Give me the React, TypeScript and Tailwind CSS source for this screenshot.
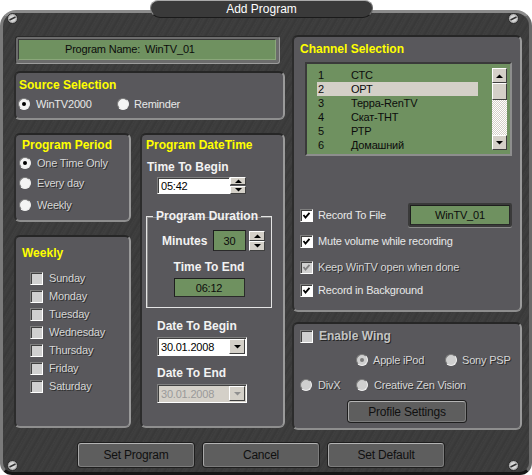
import React from "react";

const body = "text-[11px] tracking-[-0.2px] leading-[14px]";
const etched = "text-[#d6d6d6] [text-shadow:1px_1px_0_#2e2e2e]";
const bevel =
  "bg-[#d4d0c8] border border-t-white border-l-white border-r-[#404040] border-b-[#404040]";
const sunken =
  "border border-t-[#808080] border-l-[#808080] border-r-white border-b-white shadow-[inset_1px_1px_0_#404040]";

function Title({ children }: { children: React.ReactNode }) {
  return <div className="text-[12px] font-bold leading-[14px] text-[#ffff00] whitespace-nowrap">{children}</div>;
}

function Heading({ children, className = "" }: { children: React.ReactNode; className?: string }) {
  return (
    <div className={"text-[12px] font-bold leading-[14px] text-[#f2f2f2] whitespace-nowrap " + className}>{children}</div>
  );
}

function Tri({ up, color = "#000" }: { up?: boolean; color?: string }) {
  return (
    <svg width="7" height="4" viewBox="0 0 7 4">
      <polygon points={up ? "0,4 7,4 3.5,0.5" : "0,0 7,0 3.5,3.5"} fill={color} />
    </svg>
  );
}

function Radio({ checked, disabled }: { checked?: boolean; disabled?: boolean }) {
  return (
    <div
      className={
        "w-[12px] h-[12px] shrink-0 rounded-full flex items-center justify-center border border-t-[#7a7a7a] border-l-[#7a7a7a] border-r-[#f0f0f0] border-b-[#f0f0f0] " +
        (disabled ? "bg-[#cfcfcf]" : "bg-[#f4f4f4]")
      }
    >
      {checked && <div className={"w-[4px] h-[4px] rounded-full " + (disabled ? "bg-[#7a7a7a]" : "bg-black")} />}
    </div>
  );
}

function Check({ checked, disabled, gray }: { checked?: boolean; disabled?: boolean; gray?: boolean }) {
  return (
    <div
      className={
        "w-[13px] h-[13px] shrink-0 flex items-center justify-center " +
        sunken +
        " " +
        (disabled || gray ? "bg-[#d0d0d0]" : "bg-white")
      }
    >
      {checked && (
        <svg width="9" height="9" viewBox="0 0 9 9">
          <polyline
            points="1.5,4 3.5,6.5 7.5,1.8"
            fill="none"
            stroke={disabled ? "#808080" : "#000"}
            strokeWidth="1.8"
          />
        </svg>
      )}
    </div>
  );
}

function Panel({ className = "", children }: { className?: string; children?: React.ReactNode }) {
  return (
    <div
      className={
        "rounded-[6px] bg-[#59585c] border-2 border-t-[#262626] border-l-[#2c2c2c] border-r-[#9a9a9a] border-b-[#8e8e8e] flex flex-col " +
        className
      }
    >
      {children}
    </div>
  );
}

function GreenBox({ className = "", children }: { className?: string; children?: React.ReactNode }) {
  return (
    <div
      className={
        "bg-[#6f9160] border border-t-[#1e1e1e] border-l-[#1e1e1e] border-r-[#2a2a2a] border-b-[#2a2a2a] flex items-center justify-center text-[#0c0c0c] " +
        body +
        " " +
        className
      }
    >
      {children}
    </div>
  );
}

function SpinButtons({ h }: { h: number }) {
  const half = h === 20 ? "h-[10px]" : "h-[8px]";
  return (
    <div className="flex flex-col justify-between w-[16px] shrink-0" style={{ height: h }}>
      <div className={bevel + " " + half + " flex items-center justify-center"}>
        <Tri up />
      </div>
      <div className={bevel + " " + half + " flex items-center justify-center"}>
        <Tri />
      </div>
    </div>
  );
}

function Combo({ value, disabled }: { value: string; disabled?: boolean }) {
  return (
    <div
      className={
        "w-[90px] h-[19px] flex items-center " +
        sunken +
        " " +
        (disabled ? "bg-[#d4d0c8]" : "bg-white")
      }
    >
      <span className={"flex-1 pl-[3px] " + body + " " + (disabled ? "text-[#9a9a9a]" : "text-black")}>{value}</span>
      <div className={bevel + " w-[16px] h-[15px] mr-[1px] flex items-center justify-center"}>
        <Tri color={disabled ? "#909090" : "#000"} />
      </div>
    </div>
  );
}

function Screw() {
  return (
    <svg width="11" height="11" viewBox="0 0 11 11">
      <circle cx="5.5" cy="5.5" r="5" fill="#b4b4b4" stroke="#2a2a2a" strokeWidth="1" />
      <circle cx="5.5" cy="5.5" r="3.2" fill="#d8d8d8" />
      <line x1="2.5" y1="7" x2="8.5" y2="4" stroke="#303030" strokeWidth="1.4" />
    </svg>
  );
}

function BigButton({ children, className = "" }: { children: React.ReactNode; className?: string }) {
  return (
    <div
      className={
        "rounded-[3px] bg-[#5e5e5e] border border-t-[#b4b4b4] border-l-[#a8a8a8] border-r-[#7c7c7c] border-b-[#7c7c7c] shadow-[0_0_0_1px_#1e1e1e] flex items-center justify-center text-[#101010] text-[12px] tracking-[-0.2px] " +
        className
      }
    >
      {children}
    </div>
  );
}

const channels = [
  ["1", "СТС"],
  ["2", "ОРТ"],
  ["3", "Терра-RenTV"],
  ["4", "Скат-ТНТ"],
  ["5", "РТР"],
  ["6", "Домашний"],
];

const days = ["Sunday", "Monday", "Tuesday", "Wednesday", "Thursday", "Friday", "Saturday"];

export default function App() {
  return (
    <div className="relative w-[532px] h-[475px] bg-white overflow-hidden font-['Liberation_Sans',Arial,sans-serif] text-[#e8e8e8]">
      <div className="mt-[10px] h-[465px] rounded-t-[16px] rounded-b-[12px] border-[3px] border-t-[#8c8c8c] border-l-[#7a7a7a] border-r-[#6a6a6a] border-b-[#161616] bg-[#3d3d3d] bg-[repeating-linear-gradient(120deg,#3b3b3b_0px,#3f3f3f_2px,#383838_5px,#404040_7px)] pt-[22px] pl-[11px] flex flex-col">
        <div className="flex items-start">
          {/* LEFT COLUMN */}
          <div className="w-[271px] flex flex-col">
            <div className="mt-[1px] ml-[1px] w-[265px] h-[28px] rounded-[3px] bg-[#6c6c6c] border border-t-[#2a2a2a] border-l-[#2a2a2a] border-r-[#9c9c9c] border-b-[#9c9c9c] p-[2px] pr-[3px] pb-[3px] flex">
              <div className="flex-1 bg-[#6f9160] border border-t-[#3a3a3a] border-l-[#3a3a3a] border-r-[#8aa77a] border-b-[#8aa77a] flex items-center text-[#0c0c0c] text-[11px] tracking-[-0.2px]">
                <span className="ml-[46px] w-[80px]">Program Name:</span>
                <span>WinTV_01</span>
              </div>
            </div>

            <Panel className="mt-[7px] h-[49px]">
              <div className="pt-[5px] pl-[3px]">
                <Title>Source Selection</Title>
              </div>
              <div className={"mt-[5px] flex items-center h-[14px] pl-[2px] " + body}>
                <div className="w-[99px] flex items-center gap-[6px]">
                  <Radio checked />
                  <span>WinTV2000</span>
                </div>
                <div className="flex items-center gap-[5px]">
                  <Radio />
                  <span>Reminder</span>
                </div>
              </div>
            </Panel>

            <div className="mt-[13px] flex gap-[9px]">
              <div className="w-[117px] flex flex-col">
                <Panel className="h-[89px]">
                  <div className="pt-[3px] pl-[6px]">
                    <Title>Program Period</Title>
                  </div>
                  <div className={"mt-[4px] h-[14px] pl-[3px] flex items-center gap-[6px] " + body}>
                    <Radio checked />
                    <span className={etched}>One Time Only</span>
                  </div>
                  <div className={"mt-[6px] h-[14px] pl-[3px] flex items-center gap-[6px] " + body}>
                    <Radio />
                    <span className={etched}>Every day</span>
                  </div>
                  <div className={"mt-[8px] h-[14px] pl-[3px] flex items-center gap-[6px] " + body}>
                    <Radio />
                    <span className={etched}>Weekly</span>
                  </div>
                </Panel>

                <Panel className="mt-[13px] h-[193px]">
                  <div className="pt-[9px] pl-[6px]">
                    <Title>Weekly</Title>
                  </div>
                  <div className="mt-[9px] flex flex-col">
                    {days.map((d) => (
                      <div key={d} className={"h-[18px] pl-[14px] flex items-center gap-[6px] " + body}>
                        <Check gray />
                        <span className={etched}>{d}</span>
                      </div>
                    ))}
                  </div>
                </Panel>
              </div>

              <Panel className="w-[145px] h-[295px]">
                <div className="pt-[3px] pl-[4px]">
                  <Title>Program DateTime</Title>
                </div>
                <Heading className="mt-[8px] pl-[5px]">Time To Begin</Heading>
                <div className="mt-[3px] pl-[15px] flex items-center">
                  <div className={"w-[73px] h-[17px] bg-white flex items-center pl-[3px] text-black " + sunken + " " + body}>
                    05:42
                  </div>
                  <SpinButtons h={17} />
                </div>

                <fieldset className="mt-[15px] ml-[4px] w-[126px] border border-[#e4e4e4] shadow-[inset_1px_1px_0_#8a8a8a] pt-[7px] pb-[10px]">
                  <legend className="ml-[6px] px-[3px] text-[12px] font-bold leading-[14px] text-[#f2f2f2]">
                    Program Duration
                  </legend>
                  <div className="h-[21px] pl-[15px] flex items-center">
                    <Heading className="w-[51px]">Minutes</Heading>
                    <GreenBox className="w-[33px] h-[21px]">30</GreenBox>
                    <div className="ml-[3px]">
                      <SpinButtons h={20} />
                    </div>
                  </div>
                  <Heading className="mt-[9px] text-center">Time To End</Heading>
                  <GreenBox className="mt-[4px] mx-auto w-[71px] h-[19px]">06:12</GreenBox>
                </fieldset>

                <Heading className="mt-[11px] pl-[15px]">Date To Begin</Heading>
                <div className="mt-[4px] pl-[15px]">
                  <Combo value="30.01.2008" />
                </div>
                <Heading className="mt-[10px] pl-[15px]">Date To End</Heading>
                <div className="mt-[4px] pl-[15px]">
                  <Combo value="30.01.2008" disabled />
                </div>
              </Panel>
            </div>
          </div>

          {/* RIGHT COLUMN */}
          <div className="ml-[7px] w-[230px] flex flex-col">
            <Panel className="h-[277px]">
              <div className="pt-[5px] pl-[6px]">
                <Title>Channel Selection</Title>
              </div>
              <div className="mt-[6px] ml-[11px] w-[207px] h-[94px] bg-[#6f9160] border-2 border-t-[#3a3a3a] border-l-[#3a3a3a] border-r-[#8e8e8e] border-b-[#8e8e8e] flex pt-[4px]">
                <div className="ml-[10px] w-[161px] flex flex-col">
                  {channels.map(([n, name], i) => (
                    <div
                      key={n}
                      className={
                        "h-[14px] flex items-center text-[#0c0c0c] " +
                        body +
                        " " +
                        (i === 1 ? "bg-[#d4d0c8]" : "")
                      }
                    >
                      <span className="w-[34px] pl-[1px]">{n}</span>
                      <span>{name}</span>
                    </div>
                  ))}
                </div>
                <div className="ml-auto mr-[3px] w-[15px] h-[82px] flex flex-col">
                  <div className={bevel + " h-[15px] flex items-center justify-center"}>
                    <Tri up />
                  </div>
                  <div className={bevel + " h-[17px]"} />
                  <div className="flex-1 bg-[repeating-conic-gradient(#d4d0c8_0_25%,#ffffff_0_50%)] bg-[length:2px_2px]" />
                  <div className={bevel + " h-[15px] flex items-center justify-center"}>
                    <Tri />
                  </div>
                </div>
              </div>

              <div className={"mt-[47px] h-[24px] pl-[6px] flex items-center " + body}>
                <Check checked />
                <span className="ml-[5px] w-[90px]">Record To File</span>
                <div className="w-[104px] h-[24px] rounded-[2px] bg-[#3a3a3a] p-[2px] shadow-[0_1px_0_#8a8a8a]">
                  <GreenBox className="w-full h-full">WinTV_01</GreenBox>
                </div>
              </div>
              <div className={"mt-[7px] h-[14px] pl-[6px] flex items-center gap-[5px] " + body}>
                <Check checked />
                <span>Mute volume while recording</span>
              </div>
              <div className={"mt-[12px] h-[14px] pl-[6px] flex items-center gap-[5px] " + body}>
                <Check checked disabled />
                <span className={etched}>Keep WinTV open when done</span>
              </div>
              <div className={"mt-[9px] h-[14px] pl-[6px] flex items-center gap-[5px] " + body}>
                <Check checked />
                <span>Record in Background</span>
              </div>
            </Panel>

            <Panel className="mt-[10px] h-[108px]">
              <div className="pt-[5px] pl-[6px] h-[19px] flex items-center gap-[6px]">
                <Check gray />
                <span className="text-[12px] font-bold text-[#c4c4c4] [text-shadow:1px_1px_0_#262626]">Enable Wing</span>
              </div>
              <div className={"mt-[10px] h-[14px] pl-[62px] flex items-center " + body}>
                <div className="w-[89px] flex items-center gap-[5px]">
                  <Radio checked disabled />
                  <span className={etched}>Apple iPod</span>
                </div>
                <div className="flex items-center gap-[5px]">
                  <Radio disabled />
                  <span className={etched}>Sony PSP</span>
                </div>
              </div>
              <div className={"mt-[11px] h-[14px] pl-[6px] flex items-center " + body}>
                <div className="w-[56px] flex items-center gap-[6px]">
                  <Radio disabled />
                  <span className={etched}>DivX</span>
                </div>
                <div className="flex items-center gap-[6px]">
                  <Radio disabled />
                  <span className={etched}>Creative Zen Vision</span>
                </div>
              </div>
              <BigButton className="mt-[9px] ml-[54px] w-[118px] h-[21px]">Profile Settings</BigButton>
            </Panel>
          </div>
        </div>

        <div className="mt-[13px] ml-[64px] flex gap-[9px]">
          <BigButton className="w-[116px] h-[24px]">Set Program</BigButton>
          <BigButton className="w-[116px] h-[24px]">Cancel</BigButton>
          <BigButton className="w-[116px] h-[24px]">Set Default</BigButton>
        </div>
      </div>

      {/* title tab */}
      <div className="absolute top-0 left-[150px] w-[223px] h-[18px] rounded-b-[10px] rounded-t-[8px] bg-[#3a3a3a] border border-t-[#aaaaaa] border-l-[#8a8a8a] border-r-[#6a6a6a] border-b-[#1a1a1a] flex items-center justify-center text-[12px] text-white">
        Add Program
      </div>

      {/* screws */}
      <div className="absolute left-[7px] top-[13px]">
        <Screw />
      </div>
      <div className="absolute left-[508px] top-[13px]">
        <Screw />
      </div>
      <div className="absolute left-[7px] top-[460px]">
        <Screw />
      </div>
      <div className="absolute left-[508px] top-[460px]">
        <Screw />
      </div>
    </div>
  );
}
